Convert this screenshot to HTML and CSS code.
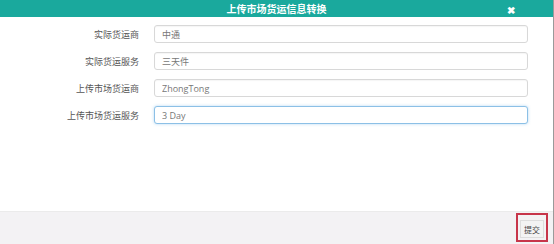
FILE: index.html
```html
<!DOCTYPE html>
<html lang="zh-CN">
<head>
  <meta charset="UTF-8" />
  <title>上传市场货运信息转换</title>
  <link rel="stylesheet" href="styles.css">
</head>
<body>
  <div class="dialog">
    <div class="dialog-head">
      <span class="dialog-title">上传市场货运信息转换</span>
      <span class="dialog-close">&#10006;</span>
    </div>
    <form class="dialog-body">
      <div class="row">
        <label>实际货运商</label>
        <input value="中通" />
      </div>
      <div class="row">
        <label>实际货运服务</label>
        <input value="三天件" />
      </div>
      <div class="row">
        <label>上传市场货运商</label>
        <input value="ZhongTong" />
      </div>
      <div class="row">
        <label>上传市场货运服务</label>
        <input class="focused" value="3 Day" />
      </div>
    </form>
    <div class="dialog-foot">
      <span class="mark"><button type="button">提交</button></span>
    </div>
  </div>
</body>
</html>
```

FILE: styles.css
```css
body {
  margin: 0;
  font-family: "Noto Sans CJK SC", "Liberation Sans", sans-serif;
  background: #fff;
}

.dialog {
  width: 553px;
  height: 244px;
  border-right: 1px solid #9a9a9a;
  display: flex;
  flex-direction: column;
}

.dialog-head {
  height: 17px;
  background: #1aa99d;
  color: #fff;
  display: flex;
  align-items: center;
  justify-content: center;
  position: relative;
}

.dialog-title {
  font-size: 10px;
  font-weight: bold;
}

.dialog-close {
  position: absolute;
  right: 38px;
  top: 2px;
  font-size: 10px;
  font-weight: bold;
}

.dialog-body {
  flex: 1;
  padding: 8px 25px 0 0;
  display: flex;
  flex-direction: column;
  gap: 9px;
}

.row {
  display: flex;
  align-items: center;
}

.row label {
  width: 139px;
  text-align: right;
  font-size: 9px;
  color: #555;
}

.row input {
  margin-left: 15px;
  flex: 1;
  height: 18px;
  box-sizing: border-box;
  border: 1px solid #d8d8d8;
  border-radius: 3px;
  padding: 0 7px;
  font-family: "Open Sans", "Noto Sans CJK SC", sans-serif;
  font-size: 9px;
  color: #777;
  box-shadow: inset 0 1px 1px rgba(0,0,0,0.04);
}

.row input.focused {
  border-color: #8cc0e6;
  box-shadow: 0 0 3px rgba(102,175,233,0.5);
}

.dialog-foot {
  height: 30px;
  background: #f3f2f4;
  border-top: 1px solid #ebebeb;
  display: flex;
  justify-content: flex-end;
  align-items: flex-end;
  padding: 0 5px 2px 0;
}

.mark {
  border: 2px solid #c7354a;
  padding: 5px 2px 2px 2px;
  display: flex;
}

button {
  width: 24px;
  height: 18px;
  padding: 0;
  border: 1px solid #ddd;
  background: #f3f3f3;
  font-family: "Noto Sans CJK SC", sans-serif;
  font-size: 8px;
  color: #444;
}
```
